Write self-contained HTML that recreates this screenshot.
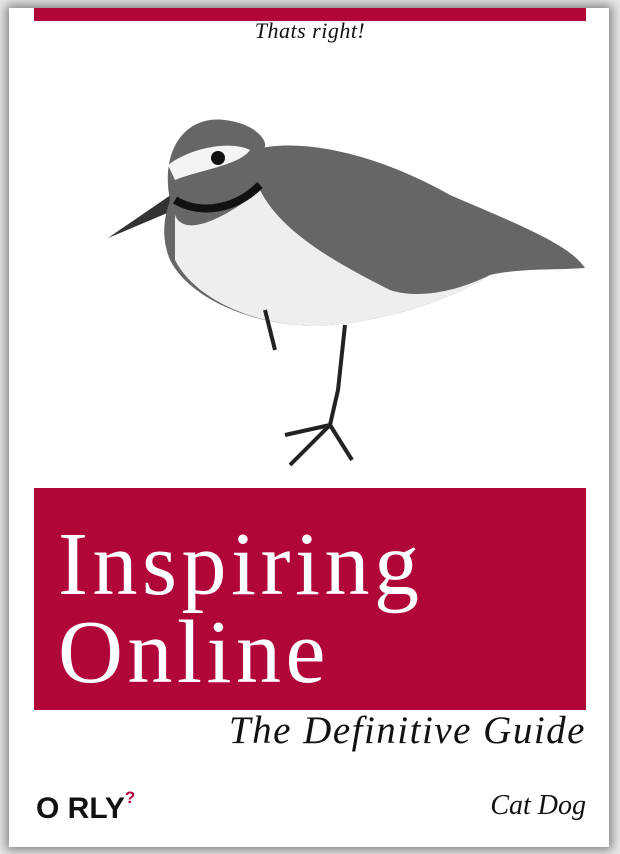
<!DOCTYPE html>
<html><head><meta charset="utf-8"><style>
html,body{margin:0;padding:0}
body{width:620px;height:854px;background:#e8e8e8;position:relative;overflow:hidden}
.card{position:absolute;left:9px;top:8px;width:600px;height:839px;background:#fff;box-shadow:0 0 10px 3px rgba(0,0,0,.45)}
.bar{position:absolute;left:34px;top:8px;width:552px;height:13px;background:#b00638}
.top{position:absolute;left:0;width:620px;top:18px;text-align:center;font:italic 22px "Liberation Serif",serif;color:#111;letter-spacing:.5px}
.red{position:absolute;left:34px;top:488px;width:552px;height:222px;background:#b00638}
.title{position:absolute;left:58px;top:521px;font:90px/88px "Liberation Serif",serif;color:#fff;letter-spacing:4.5px}
.sub{position:absolute;right:34px;top:708px;font:italic 39px "Liberation Serif",serif;color:#111;letter-spacing:1.5px}
.orly{position:absolute;left:36px;top:792px;font:bold 30px "Liberation Sans",sans-serif;color:#111}
.orly sup{color:#b00638;font-size:17px;position:relative;top:-4px}
.auth{position:absolute;right:34px;top:790px;font:italic 28px "Liberation Serif",serif;color:#111}
</style></head><body>
<div class="card"></div>
<div class="bar"></div>
<div class="top">Thats right!</div>
<svg style="position:absolute;left:0;top:0" width="620" height="480">
<path d="M108 238 L178 190 L184 206 Z" fill="#333"/>
<path d="M170 200 C160 150 185 115 225 120 C265 125 270 150 262 148 C300 140 370 150 450 195 C520 225 570 245 585 268 C560 270 520 268 490 275 C450 300 390 320 330 325 C260 330 190 300 170 260 C160 235 165 215 170 200 Z" fill="#666"/>
<path d="M175 215 C185 240 230 215 260 190 C280 230 330 260 390 290 C420 300 460 290 490 275 C450 300 390 320 330 325 C260 330 195 300 175 260 Z" fill="#eee"/>
<path d="M168 165 C190 148 230 140 250 150 C240 165 200 170 175 180 Z" fill="#f4f4f4"/>
<circle cx="218" cy="158" r="7" fill="#111"/>
<path d="M175 200 C200 215 235 210 260 185" stroke="#111" stroke-width="8" fill="none"/>
<path d="M345 325 L338 390 L330 425 M330 425 L285 435 M330 425 L290 465 M330 425 L352 460 M265 310 L275 350" stroke="#222" stroke-width="4" fill="none"/>
</svg>
<div class="red"></div>
<div class="title">Inspiring<br>Online</div>
<div class="sub">The Definitive Guide</div>
<div class="orly">O RLY<sup>?</sup></div>
<div class="auth">Cat Dog</div>
</body></html>
